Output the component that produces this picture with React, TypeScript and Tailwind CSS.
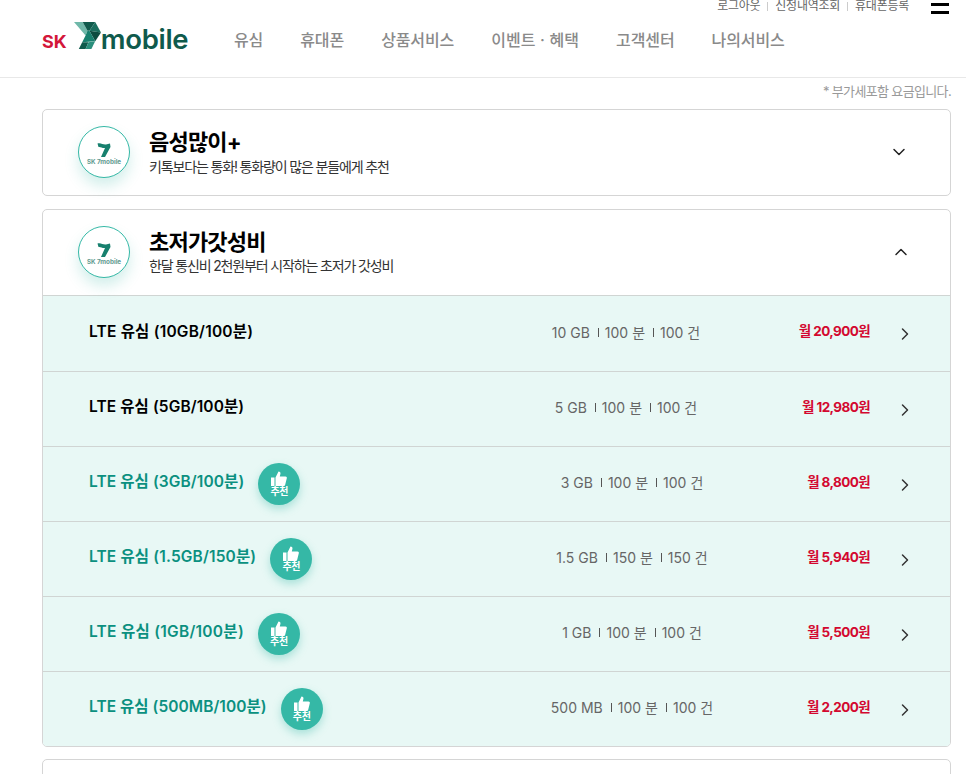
import { ChevronDown, ChevronRight, ChevronUp } from "lucide-react";

const font = "font-['Inter','Noto_Sans_CJK_KR',sans-serif]";

const plans = [
  { name: "LTE 유심 (10GB/100분)", data: "10 GB", voice: "100 분", sms: "100 건", price: "20,900원", best: false, nameClass: "tracking-[0.2px]" },
  { name: "LTE 유심 (5GB/100분)", data: "5 GB", voice: "100 분", sms: "100 건", price: "12,980원", best: false, nameClass: "tracking-[0.1px]" },
  { name: "LTE 유심 (3GB/100분)", data: "3 GB", voice: "100 분", sms: "100 건", price: "8,800원", best: true, nameClass: "tracking-[0.1px]" },
  { name: "LTE 유심 (1.5GB/150분)", data: "1.5 GB", voice: "150 분", sms: "150 건", price: "5,940원", best: true, nameClass: "tracking-[0.15px]" },
  { name: "LTE 유심 (1GB/100분)", data: "1 GB", voice: "100 분", sms: "100 건", price: "5,500원", best: true, nameClass: "tracking-[0.27px]" },
  { name: "LTE 유심 (500MB/100분)", data: "500 MB", voice: "100 분", sms: "100 건", price: "2,200원", best: true, nameClass: "tracking-[0.05px]" },
];

function Seven({ className }: { className: string }) {
  return (
    <svg viewBox="0 0 28 28" className={className}>
      <path d="M0 0H9L14 9L12 14Z" fill="#6fb8a9" />
      <path d="M9 0H22L16 9H14Z" fill="#0f5a4c" />
      <path d="M22 0L28 11L16 9Z" fill="#1b6f5f" />
      <path d="M16 9L28 11L22 20Z" fill="#0c4c40" />
      <path d="M14 9H16L22 20L8.5 21L12 14Z" fill="#17806e" />
      <path d="M8.5 21H15L12 28H5Z" fill="#0f5a4c" />
      <path d="M15 21L22 20L18 28H12Z" fill="#2a8f7c" />
    </svg>
  );
}

function RoundLogo() {
  return (
    <div className="flex h-[52px] w-[52px] shrink-0 flex-col items-center justify-center rounded-full border border-[#35b8a6] bg-white pt-[3px] shadow-[0_8px_14px_rgba(53,184,166,0.22)]">
      <svg viewBox="0 0 28 30" className="h-[16px] w-[14px]">
        <path d="M1 2C8 0 12 5 18 4L26 2L27 9L16 29H8L16 11C11 12 7 8 3 9Z" fill="#17806e" />
      </svg>
      <span className="mt-[1px] text-[6.3px] font-bold leading-[7px] whitespace-nowrap text-[#5f9a90]">SK 7mobile</span>
    </div>
  );
}

function Badge() {
  return (
    <div className="ml-[14px] flex h-[42px] w-[42px] flex-col items-center justify-center rounded-full bg-[#35b8a6] shadow-[0_4px_8px_rgba(53,184,166,0.35)]">
      <svg viewBox="0 0 16 15" className="h-[15px] w-[16px]">
        <path d="M0 6.5H3.5V15H0Z M4.5 6.5L7.5 0.5C9 0.5 9.8 1.6 9.4 3L8.8 5.5H14.5C15.6 5.5 16 6.4 15.8 7.2L14.2 13.8C14 14.6 13.4 15 12.6 15H4.5Z" fill="#fff" />
      </svg>
      <span className="text-[10px] font-bold leading-[11px] tracking-[-0.3px] text-white">추천</span>
    </div>
  );
}

export default function App() {
  return (
    <div className={`${font} h-[774px] w-[966px] overflow-hidden bg-white`}>
      <header className="relative h-[78px] border-b border-[#e8e8e8]">
        <div className="absolute right-[57px] top-[-2px] flex items-center text-[12px] leading-[16px] tracking-[-0.25px] text-[#666]">
          <span>로그아웃</span>
          <span className="mx-[7px] h-[9px] w-px bg-[#ccc]" />
          <span>신청내역조회</span>
          <span className="mx-[7px] h-[9px] w-px bg-[#ccc]" />
          <span>휴대폰등록</span>
        </div>
        <div className="absolute right-[17px] top-[3px] flex w-[18px] flex-col gap-[5px]">
          <span className="h-[3px] bg-black" />
          <span className="h-[3px] bg-black" />
        </div>
        <div className="flex items-center pl-[42px] pt-[22px]">
          <div className="flex w-[147px] items-end self-start">
            <span className="mb-[-3px] text-[18px] font-bold leading-[22px] text-[#d3163a]">SK</span>
            <Seven className="mb-[1px] ml-[7px] h-[27px] w-[27px] shrink-0" />
            <span className="mb-[-3px] text-[27.5px] font-semibold leading-[28px] tracking-[-0.3px] text-[#0f5a4c]">mobile</span>
          </div>
          <nav className="ml-[45px] flex gap-[37px] whitespace-nowrap text-[16px] font-medium leading-[36px] tracking-[-0.1px] text-[#8a8a8a]">
            <span>유심</span>
            <span>휴대폰</span>
            <span>상품서비스</span>
            <span className="tracking-[0.1px]">이벤트 · 혜택</span>
            <span>고객센터</span>
            <span>나의서비스</span>
          </nav>
        </div>
      </header>

      <main className="pl-[42px] pr-[15px]">
        <p className="h-[31px] pt-[3px] text-right text-[13px] leading-[20px] tracking-[-0.65px] text-[#999]">* 부가세포함 요금입니다.</p>

        <section className="flex h-[87px] items-center rounded-[5px] border border-[#d5d5d5] pb-[1px] pl-[35px] pr-[41px]">
          <RoundLogo />
          <div className="ml-[19px] flex-1 pt-[1px]">
            <h2 className="text-[22px] font-bold leading-[28px] tracking-[-0.8px] text-black">음성많이+</h2>
            <p className="mt-[1px] text-[14px] leading-[20px] tracking-[-1.15px] text-[#333]">키톡보다는 통화! 통화량이 많은 분들에게 추천</p>
          </div>
          <ChevronDown className="h-[20px] w-[20px] text-[#222]" strokeWidth={1.8} />
        </section>

        <section className="mt-[13px] overflow-hidden rounded-[5px] border border-[#d5d5d5]">
          <div className="flex h-[85px] items-center pb-[1px] pl-[35px] pr-[39px]">
            <RoundLogo />
            <div className="ml-[19px] flex-1">
              <h2 className="text-[22px] font-bold leading-[28px] tracking-[-0.8px] text-black">초저가갓성비</h2>
              <p className="text-[14px] leading-[20px] tracking-[-1.15px] text-[#333]">한달 통신비 2천원부터 시작하는 초저가 갓성비</p>
            </div>
            <ChevronUp className="h-[20px] w-[20px] text-[#222]" strokeWidth={1.8} />
          </div>
          {plans.map((p, i) => (
            <div
              key={p.name}
              className={`flex items-center border-t border-[#d0d5d3] bg-[#e8f8f5] pl-[46px] pr-[35px] ${i === 0 ? "h-[76px]" : "h-[75px]"}`}
            >
              <div className={`flex shrink-0 items-center ${p.best ? "w-[443px]" : "w-[437px]"}`}>
                <span className={`mb-[4px] text-[15.5px] font-semibold ${p.nameClass} ${p.best ? "text-[#0b9080]" : "text-black"}`}>{p.name}</span>
                {p.best && <Badge />}
              </div>
              <div className="mb-[3px] flex w-[200px] shrink-0 justify-center">
                <div className="flex items-center justify-center text-[14px] text-[#666]">
                  <span>{p.data}</span>
                  <span className="ml-[8px] mr-[6px] h-[9px] w-px bg-[#555]" />
                  <span>{p.voice}</span>
                  <span className="ml-[8px] mr-[6px] h-[9px] w-px bg-[#555]" />
                  <span>{p.sms}</span>
                </div>
              </div>
              <div className="mb-[4px] flex-1 text-right text-[13.5px] font-bold tracking-[-0.6px] text-[#d3082f]">월 {p.price}</div>
              <ChevronRight className="ml-[25px] mt-[1px] h-[20px] w-[20px] shrink-0 text-[#333]" strokeWidth={1.8} />
            </div>
          ))}
        </section>

        <section className="mt-[12px] h-[60px] rounded-[5px] border border-[#d5d5d5]" />
      </main>
    </div>
  );
}
